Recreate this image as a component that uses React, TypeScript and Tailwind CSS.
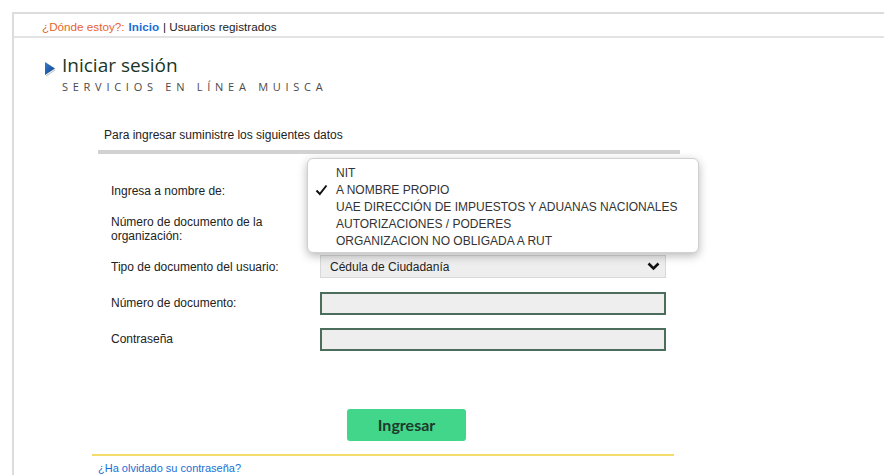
const fields = [
  { label: "Ingresa a nombre de:", kind: "select", value: "A NOMBRE PROPIO", h: "h-[36px]" },
  { label: "Número de documento de la organización:", kind: "input", h: "h-[39px]" },
  { label: "Tipo de documento del usuario:", kind: "select", value: "Cédula de Ciudadanía", h: "h-[37px]" },
  { label: "Número de documento:", kind: "input", h: "h-[36px]" },
  { label: "Contraseña", kind: "input", h: "h-[36px]" },
];

const options = [
  "NIT",
  "A NOMBRE PROPIO",
  "UAE DIRECCIÓN DE IMPUESTOS Y ADUANAS NACIONALES",
  "AUTORIZACIONES / PODERES",
  "ORGANIZACION NO OBLIGADA A RUT",
];

function Chevron() {
  return (
    <svg width="13" height="9" viewBox="0 0 13 9" aria-hidden>
      <path d="M1.5 1.5 L6.5 6.5 L11.5 1.5" fill="none" stroke="#111" strokeWidth="2.6" />
    </svg>
  );
}

export default function App() {
  return (
    <div
      className="relative min-h-[475px] w-full overflow-hidden bg-white pt-[12px] text-[12px] text-[#222]"
      style={{ fontFamily: '"Liberation Sans", Arial, sans-serif' }}
    >
      <div className="ml-[12px] min-h-[463px] border-l-2 border-t-2 border-[#dcdcdc]">
        {/* breadcrumb */}
        <div className="flex h-[24px] items-center border-b-2 border-[#e3e3e3] pl-[28px] pt-[3px] text-[11.7px]">
          <span className="text-[#e8632b]">¿Dónde estoy?:</span>
          <span className="ml-[4px] font-bold text-[#1a6fd6]">Inicio</span>
          <span className="ml-[4px]">| Usuarios registrados</span>
        </div>

        {/* header */}
        <div className="flex items-start pl-[30px] pt-[15px]">
          <svg width="13" height="17" viewBox="0 0 13 17" className="mt-[8px]" aria-hidden>
            <defs>
              <linearGradient id="arr" x1="0" y1="0" x2="1" y2="1">
                <stop offset="0" stopColor="#2f7fd0" />
                <stop offset="1" stopColor="#163f8a" />
              </linearGradient>
            </defs>
            <path d="M1 1 L11 7.5 L1 14 Z" fill="url(#arr)" />
            <path d="M2 15 L11 9" stroke="#c9c9c9" strokeWidth="1.2" />
          </svg>
          <div className="ml-[5px]" style={{ fontFamily: '"Open Sans", sans-serif' }}>
            <div className="text-[19px] leading-[24px] text-[#173626]">Iniciar sesión</div>
            <div className="mt-[3px] text-[11px] leading-[14px] tracking-[0.43em] text-[#4a4a4a]">
              SERVICIOS EN LÍNEA MUISCA
            </div>
          </div>
        </div>

        {/* form */}
        <div className="ml-[84px] mt-[34px] w-[582px]">
          <div className="pb-[8px] pl-[6px] leading-[14px]">Para ingresar suministre los siguientes datos</div>
          <div className="h-[4px] bg-[#d2d2d2]" />

          <div className="mt-[19px] pl-[13px]">
            {fields.map((f) => (
              <div key={f.label} className={`flex items-center ${f.h}`}>
                <div className="w-[209px] pr-[40px] leading-[14px]">{f.label}</div>
                {f.kind === "select" ? (
                  <div className="flex h-[23px] w-[346px] items-center justify-between border border-[#d8d8d8] bg-[#eeeeee] pl-[9px] pr-[5px]">
                    <span>{f.value}</span>
                    <Chevron />
                  </div>
                ) : (
                  <div className="h-[23px] w-[346px] border-2 border-[#4b6d5b] bg-[#eeeeee]" />
                )}
              </div>
            ))}
          </div>

          <div className="mt-[52px] flex justify-center pl-[35px]">
            <button
              className="h-[32px] w-[119px] rounded-[3px] bg-[#42d68b] text-[16px] font-bold text-[#1f3a2c]"
              style={{ fontFamily: "Lato, sans-serif" }}
            >
              Ingresar
            </button>
          </div>
        </div>

        <div className="ml-[78px] mt-[13px] h-[2px] w-[582px] bg-[#f3dc6a]" />
        <div className="ml-[84px] mt-[4px] text-[11px] text-[#1a6fd6]">¿Ha olvidado su contraseña?</div>
      </div>

      {/* open select menu */}
      <div className="absolute left-[307px] top-[158px] h-[95px] w-[392px] rounded-[6px] border border-[#d0d0d0] bg-white pt-[5px] shadow-[0_3px_10px_rgba(0,0,0,0.28)]">
        {options.map((o) => (
          <div key={o} className="flex h-[17px] items-center text-[12px] text-[#333]">
            <span className="flex w-[28px] justify-end pr-[8px]">
              {o === "A NOMBRE PROPIO" && (
                <svg width="13" height="12" viewBox="0 0 13 12" aria-hidden>
                  <path d="M1.5 6.5 L4.8 10 L11.5 1.5" fill="none" stroke="#111" strokeWidth="2" />
                </svg>
              )}
            </span>
            <span>{o}</span>
          </div>
        ))}
      </div>
    </div>
  );
}
